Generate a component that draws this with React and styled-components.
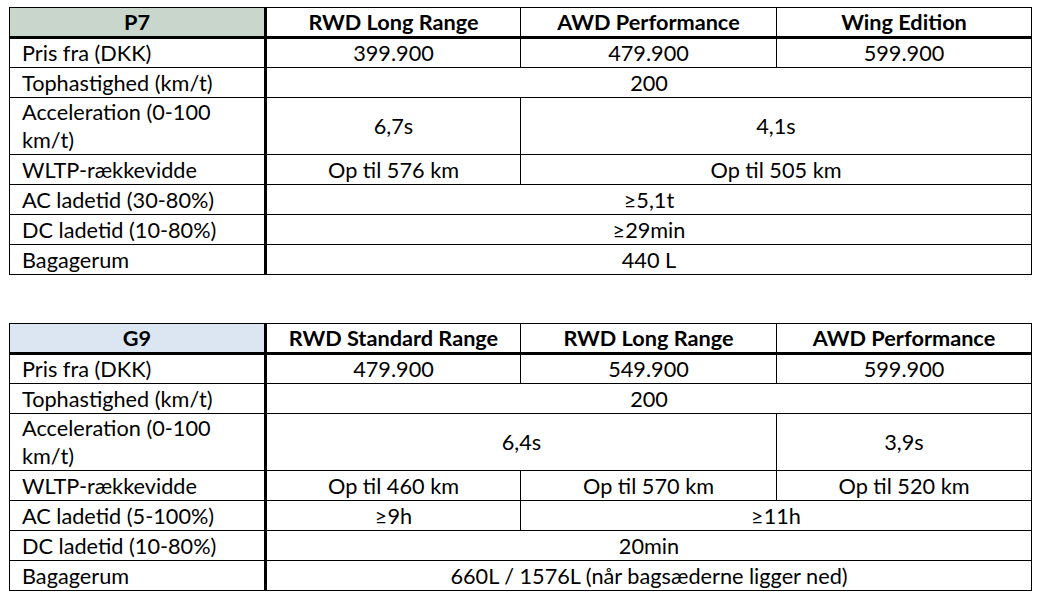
import styled, { createGlobalStyle } from "styled-components"

const Global = createGlobalStyle`
    body {
        margin: 0;
        background: #ffffff;
        font-family: Lato, "Liberation Sans", sans-serif;
        color: #000000;
    }
`

// kolonnebredder (label + tre modeller)
const bredder = [256, 255, 256, 255]

const p7 = {
    navn: "P7",
    farve: "#c9d6cb",
    modeller: ["RWD Long Range", "AWD Performance", "Wing Edition"],
    rækker: [
        { label: "Pris fra (DKK)", celler: [["399.900", 1], ["479.900", 1], ["599.900", 1]] },
        { label: "Tophastighed (km/t)", celler: [["200", 3]] },
        { label: ["Acceleration (0-100", "km/t)"], celler: [["6,7s", 1], ["4,1s", 2]], høj: true },
        { label: "WLTP-rækkevidde", celler: [["Op til 576 km", 1], ["Op til 505 km", 2]] },
        { label: "AC ladetid (30-80%)", celler: [["≥5,1t", 3]] },
        { label: "DC ladetid (10-80%)", celler: [["≥29min", 3]] },
        { label: "Bagagerum", celler: [["440 L", 3]] },
    ],
}

const g9 = {
    navn: "G9",
    farve: "#dce6f2",
    modeller: ["RWD Standard Range", "RWD Long Range", "AWD Performance"],
    rækker: [
        { label: "Pris fra (DKK)", celler: [["479.900", 1], ["549.900", 1], ["599.900", 1]] },
        { label: "Tophastighed (km/t)", celler: [["200", 3]] },
        { label: ["Acceleration (0-100", "km/t)"], celler: [["6,4s", 2], ["3,9s", 1]], høj: true },
        { label: "WLTP-rækkevidde", celler: [["Op til 460 km", 1], ["Op til 570 km", 1], ["Op til 520 km", 1]] },
        { label: "AC ladetid (5-100%)", celler: [["≥9h", 1], ["≥11h", 2]] },
        { label: "DC ladetid (10-80%)", celler: [["20min", 3]] },
        { label: "Bagagerum", celler: [["660L / 1576L (når bagsæderne ligger ned)", 3]] },
    ],
}

function Specifikationer({ bil }) {
    return (
        <Tabel>
            <colgroup>
                {bredder.map((b, i) => <Kolonne key={i} $bredde={b} />)}
            </colgroup>
            <thead>
                <tr>
                    <HovedCelle $farve={bil.farve}>{bil.navn}</HovedCelle>
                    {bil.modeller.map((m) => <HovedCelle key={m}>{m}</HovedCelle>)}
                </tr>
            </thead>
            <tbody>
                {bil.rækker.map((r, i) => (
                    <Række key={i} $høj={r.høj}>
                        <Label>
                            {Array.isArray(r.label) ? <>{r.label[0]}<br />{r.label[1]}</> : r.label}
                        </Label>
                        {r.celler.map(([tekst, span], j) => (
                            <Værdi key={j} colSpan={span}>{tekst}</Værdi>
                        ))}
                    </Række>
                ))}
            </tbody>
        </Tabel>
    )
}

export default function App() {
    return (
        <Side>
            <Global />
            <Specifikationer bil={p7} />
            <Specifikationer bil={g9} />
        </Side>
    )
}

const Side = styled.main`
    display: flex;
    flex-direction: column;
    gap: 48px;
    padding: 7px 0 0 9px;
`

const Kolonne = styled.col`
    width: ${(p) => p.$bredde}px;
`

const Tabel = styled.table`
    width: 1022px;
    table-layout: fixed;
    border-collapse: collapse;
    font-size: 21.7px;
    line-height: 28px;

    td, th {
        border: 1px solid #000;
        padding: 0;
    }

    td:first-child, th:first-child {
        border-right: 3px solid #000;
    }
`

const HovedCelle = styled.th`
    height: 28px;
    font-weight: 700;
    text-align: center;
    background: ${(p) => p.$farve || "#ffffff"};
    border-bottom: 3px solid #000 !important;
`

const Række = styled.tr`
    height: ${(p) => (p.$høj ? "57px" : "30px")};
`

const Label = styled.td`
    padding-left: 12px !important;
    text-align: left;
`

const Værdi = styled.td`
    text-align: center;
`
